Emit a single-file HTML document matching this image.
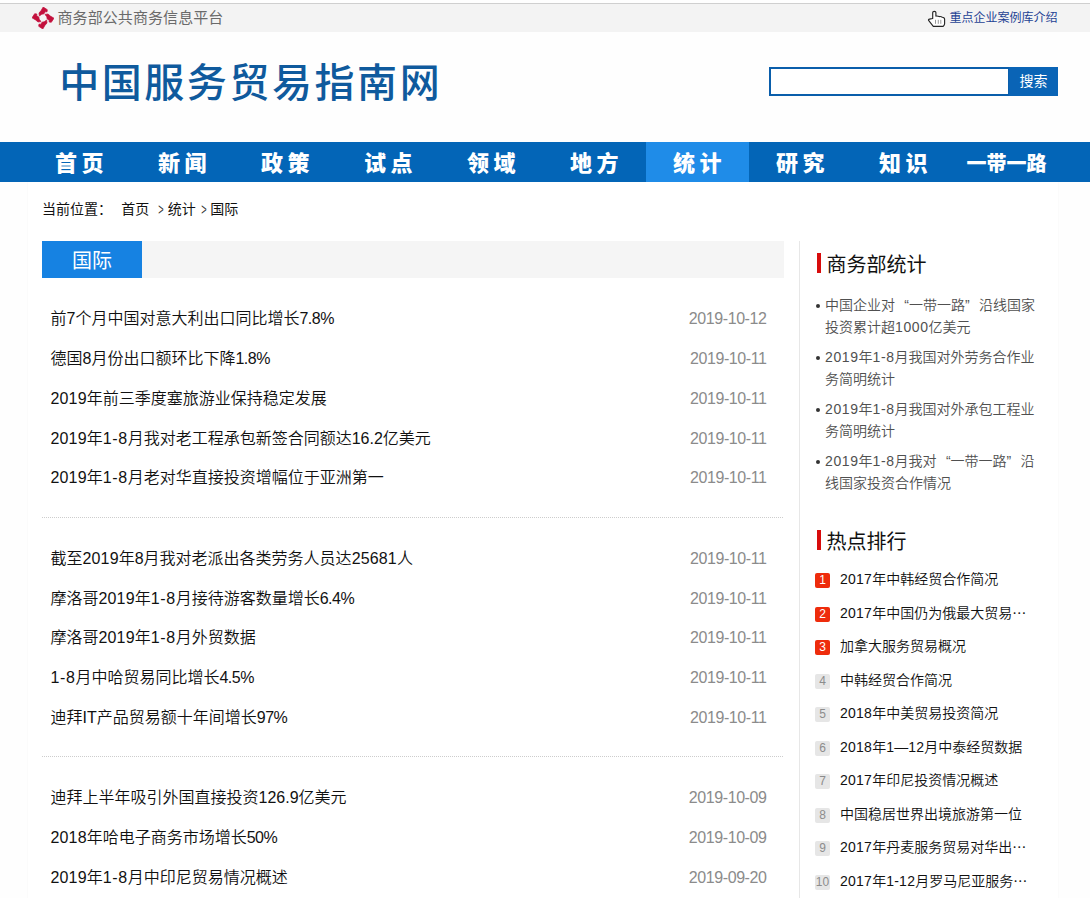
<!DOCTYPE html>
<html lang="zh-CN">
<head>
<meta charset="utf-8">
<title>中国服务贸易指南网</title>
<style>
*{margin:0;padding:0;box-sizing:border-box;}
html,body{width:1090px;height:898px;overflow:hidden;background:#fefefe;}
body{font-family:"Liberation Sans","Noto Sans CJK SC",sans-serif;color:#111;position:relative;}
a{text-decoration:none;color:inherit;}
ul{list-style:none;}
#topbar{position:absolute;left:0;top:3px;width:1090px;height:29px;background:#f3f3f3;border-top:1px solid #cfcfcf;}
#topbar .plat{position:absolute;left:57.5px;top:0;height:29px;line-height:28px;font-size:15px;letter-spacing:.08px;color:#6a6a6a;}
#topbar .logo{position:absolute;left:32px;top:3px;width:22px;height:22px;}
#topbar .case{position:absolute;right:32.5px;top:0;height:29px;line-height:29px;font-size:12px;color:#1e4294;}
#topbar .hand{position:absolute;left:920px;top:0;width:40px;height:28px;}
#wrap{position:absolute;left:27px;top:182px;width:1032px;height:716px;background:#fff;border-left:1px solid #fbfbfb;border-right:1px solid #fbfbfb;}
#title{position:absolute;left:59.2px;top:52.7px;font-size:40px;letter-spacing:2.56px;font-weight:500;line-height:60px;color:#0f5a9d;white-space:nowrap;}
#search{position:absolute;left:769px;top:67px;width:289px;height:29px;}
#search .inp{position:absolute;left:0;top:0;width:241px;height:29px;border:2px solid #0a5eab;background:#fff;}
#search .btn{position:absolute;left:240px;top:0;width:49px;height:29px;background:#0a64b6;color:#fff;font-size:14px;line-height:29px;text-align:center;}
#nav{position:absolute;left:0;top:142px;width:1090px;height:40px;background:#0365b7;}
#nav ul{position:absolute;left:28px;top:0;width:1030px;height:40px;display:flex;}
#nav li{width:103px;height:40px;line-height:44px;text-align:center;color:#fff;font-size:20px;font-weight:900;white-space:nowrap;}
#nav li.two{font-size:22px;letter-spacing:4.7px;text-indent:4.2px;}
#nav li.on{background:#1f8ce8;}
#crumb{position:absolute;left:42px;top:198px;height:22px;line-height:22px;font-size:14px;color:#111;white-space:nowrap;}
#crumb span,#crumb a,#crumb i{position:absolute;top:0;font-style:normal;}
#crumb i{width:10px;text-align:center;transform:scale(.66,1.15);color:#333;}
#sec{position:absolute;left:42px;top:241px;width:742px;height:37px;background:#f5f5f5;}
#sec .tab{position:absolute;left:0;top:0;width:100px;height:37px;background:#1682e2;color:#fff;font-size:20px;line-height:40px;text-align:center;}
#list{position:absolute;left:42px;top:0;width:742px;height:898px;}
#list li{position:absolute;left:0;width:742px;height:40px;line-height:40px;font-size:16px;color:#111;font-weight:350;padding-left:8.5px;white-space:nowrap;}
#list .hy{letter-spacing:.6px;}
#list .pc{letter-spacing:-.5px;}
#list .dg{letter-spacing:.15px;}
#list li time{position:absolute;right:17.5px;top:0;color:#8b8b8b;font-size:16px;letter-spacing:-.42px;font-weight:400;}
#list li.sep{padding:0;height:1px;background:repeating-linear-gradient(90deg,#cdcdcd 0,#cdcdcd 1px,transparent 1px,transparent 2px);}
#side{position:absolute;left:799px;top:241px;width:260px;height:657px;border-left:1px solid #e7e7e7;}
.h{position:absolute;left:17px;height:20px;width:200px;}
.h b{position:absolute;left:0;top:-1px;width:4px;height:20px;background:#d80c0c;}
.h span{position:absolute;left:9.5px;top:-3.7px;font-size:20px;line-height:30px;color:#111;font-weight:normal;white-space:nowrap;}
#stat{position:absolute;left:17px;top:53px;width:236px;}
#stat li{font-size:14px;line-height:22px;color:#505050;font-weight:350;padding-left:8px;position:relative;margin-bottom:8px;width:236px;white-space:nowrap;}
#stat .n{letter-spacing:.6px;}
#rank .n{letter-spacing:.25px;}
.q{display:inline-block;width:14px;}
.q.l{text-align:right;}
.q.r{text-align:left;}
#stat li:before{content:"";position:absolute;left:-1px;top:10px;width:4px;height:4px;border-radius:50%;background:#333;}
#rank{position:absolute;left:15px;top:322px;width:240px;}
#rank li{height:33.5px;line-height:33.5px;font-size:14px;color:#111;font-weight:350;padding-left:25px;position:relative;white-space:nowrap;}
#rank li em{position:absolute;left:0;top:10px;width:15px;height:15px;border-radius:2px;background:#e6e6e6;color:#888;font-style:normal;font-size:12px;line-height:15px;text-align:center;font-weight:400;color:#8c8c8c;}
#rank li.hot em{background:#ee2c0c;color:#fff;}
</style>
</head>
<body>
<div id="wrap"></div>
<div id="topbar">
  <svg class="logo" viewBox="0 0 22 22"><g fill="#c3103c" stroke="#c3103c" stroke-width=".7" stroke-linejoin="round"><path d="M11.2 0L15.3 2.7L15 4.9L13.4 4.6L12 6.8L9.8 7.2L7.4 9L7 6L9.1 3.6z" transform="rotate(0 11 11)"/><path d="M11.2 0L15.3 2.7L15 4.9L13.4 4.6L12 6.8L9.8 7.2L7.4 9L7 6L9.1 3.6z" transform="rotate(90 11 11)"/><path d="M11.2 0L15.3 2.7L15 4.9L13.4 4.6L12 6.8L9.8 7.2L7.4 9L7 6L9.1 3.6z" transform="rotate(180 11 11)"/><path d="M11.2 0L15.3 2.7L15 4.9L13.4 4.6L12 6.8L9.8 7.2L7.4 9L7 6L9.1 3.6z" transform="rotate(270 11 11)"/></g></svg>
  <span class="plat">商务部公共商务信息平台</span>
  <svg class="hand" viewBox="0 0 40 28"><path d="M12.7 14.5V8.4Q12.7 7.3 14.3 7.3Q15.9 7.3 15.9 8.4V12.1Q17.6 11.8 19.2 12.6Q21 12.3 22.3 13.2Q24.6 13.3 24.6 15.2V19.8Q24.6 21 23.2 22.3H13.3L8.6 16.4Q8.1 15.4 9.5 15.1z" fill="#fff" stroke="#262626" stroke-width="1.15" stroke-linejoin="round"/><path d="M15.5 15.8V19.8M18.3 15.8V19.8M20.8 15.8V19.8" stroke="#9a9a9a" stroke-width="1" fill="none"/></svg>
  <a class="case">重点企业案例库介绍</a>
</div>
<div id="title">中国服务贸易指南网</div>
<div id="search"><div class="inp"></div><div class="btn">搜索</div></div>
<div id="nav"><ul>
  <li class="two">首页</li><li class="two">新闻</li><li class="two">政策</li><li class="two">试点</li><li class="two">领域</li><li class="two">地方</li><li class="two on">统计</li><li class="two">研究</li><li class="two">知识</li><li>一带一路</li>
</ul></div>
<div id="crumb"><span style="left:0">当前位置：</span><a style="left:79.3px">首页</a><i style="left:114px">&gt;</i><a style="left:125.7px">统计</a><i style="left:157.3px">&gt;</i><a style="left:168.2px">国际</a></div>
<div id="sec"><div class="tab">国际</div></div>
<ul id="list">
  <li style="top:299px">前7个月中国对意大利出口同比增长<span class="pc">7.8%</span><time>2019-10-12</time></li>
  <li style="top:339px">德国8月份出口额环比下降<span class="pc">1.8%</span><time>2019-10-11</time></li>
  <li style="top:379px"><span class="dg">2019</span>年前三季度塞旅游业保持稳定发展<time>2019-10-11</time></li>
  <li style="top:419px"><span class="dg">2019</span>年<span class="hy">1-8</span>月我对老工程承包新签合同额达16.2亿美元<time>2019-10-11</time></li>
  <li style="top:458px"><span class="dg">2019</span>年<span class="hy">1-8</span>月老对华直接投资增幅位于亚洲第一<time>2019-10-11</time></li>
  <li class="sep" style="top:517px"></li>
  <li style="top:539px">截至<span class="dg">2019</span>年8月我对老派出各类劳务人员达<span class="dg">25681</span>人<time>2019-10-11</time></li>
  <li style="top:579px">摩洛哥<span class="dg">2019</span>年<span class="hy">1-8</span>月接待游客数量增长<span class="pc">6.4%</span><time>2019-10-11</time></li>
  <li style="top:618px">摩洛哥<span class="dg">2019</span>年<span class="hy">1-8</span>月外贸数据<time>2019-10-11</time></li>
  <li style="top:658px"><span class="hy">1-8</span>月中哈贸易同比增长<span class="pc">4.5%</span><time>2019-10-11</time></li>
  <li style="top:698px">迪拜IT产品贸易额十年间增长<span class="pc">97%</span><time>2019-10-11</time></li>
  <li class="sep" style="top:756px"></li>
  <li style="top:778px">迪拜上半年吸引外国直接投资126.9亿美元<time>2019-10-09</time></li>
  <li style="top:818px"><span class="dg">2018</span>年哈电子商务市场增长<span class="pc">50%</span><time>2019-10-09</time></li>
  <li style="top:858px"><span class="dg">2019</span>年<span class="hy">1-8</span>月中印尼贸易情况概述<time>2019-09-20</time></li>
</ul>
<div id="side">
  <div class="h" style="top:13px"><b></b><span>商务部统计</span></div>
  <ul id="stat">
    <li>中国企业对<span class="q l">“</span>一带一路<span class="q r">”</span>沿线国家<br>投资累计超<span class="n">1000</span>亿美元</li>
    <li><span class="n">2019</span>年<span class="n">1-8</span>月我国对外劳务合作业<br>务简明统计</li>
    <li><span class="n">2019</span>年<span class="n">1-8</span>月我国对外承包工程业<br>务简明统计</li>
    <li><span class="n">2019</span>年<span class="n">1-8</span>月我对<span class="q l">“</span>一带一路<span class="q r">”</span>沿<br>线国家投资合作情况</li>
  </ul>
  <div class="h" style="top:290px"><b></b><span>热点排行</span></div>
  <ul id="rank">
    <li class="hot"><em>1</em><span class="n">2017</span>年中韩经贸合作简况</li>
    <li class="hot"><em>2</em><span class="n">2017</span>年中国仍为俄最大贸易⋯</li>
    <li class="hot"><em>3</em>加拿大服务贸易概况</li>
    <li><em>4</em>中韩经贸合作简况</li>
    <li><em>5</em><span class="n">2018</span>年中美贸易投资简况</li>
    <li><em>6</em><span class="n">2018</span>年<span class="n">1</span>—<span class="n">12</span>月中泰经贸数据</li>
    <li><em>7</em><span class="n">2017</span>年印尼投资情况概述</li>
    <li><em>8</em>中国稳居世界出境旅游第一位</li>
    <li><em>9</em><span class="n">2017</span>年丹麦服务贸易对华出⋯</li>
    <li><em>10</em><span class="n">2017</span>年<span class="n">1-12</span>月罗马尼亚服务⋯</li>
  </ul>
</div>
</body>
</html>
